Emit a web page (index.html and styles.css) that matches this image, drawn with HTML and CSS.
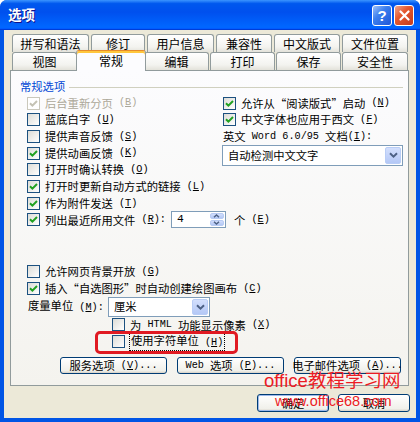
FILE: index.html
```html
<!DOCTYPE html>
<html>
    <head>
        <meta charset="utf-8">
        <title>选项</title>
        <link rel="stylesheet" href="styles.css">
    </head>
    <body>
        <div class="window">
            <div class="titlebar">
                <span class="title">选项</span>
                <span class="cbtn help">?</span>
                <span class="cbtn close">
                    <svg width="11" height="11" viewBox="0 0 11 11"><path d="M1.5 1.5L9.5 9.5M9.5 1.5L1.5 9.5" stroke="#fff" stroke-width="2.2" stroke-linecap="round"/></svg>
                </span>
            </div>

            <div class="client">
                <!-- Back row of tabs -->
                <div class="tabrow row1">
                    <span class="tab">拼写和语法</span>
                    <span class="tab">修订</span>
                    <span class="tab">用户信息</span>
                    <span class="tab">兼容性</span>
                    <span class="tab">中文版式</span>
                    <span class="tab">文件位置</span>
                </div>
                <!-- Front row, holds the selected tab -->
                <div class="tabrow row2">
                    <span class="tab">视图</span>
                    <span class="tab active">常规</span>
                    <span class="tab">编辑</span>
                    <span class="tab">打印</span>
                    <span class="tab">保存</span>
                    <span class="tab">安全性</span>
                </div>

                <div class="panel">
                    <div class="group-label">常规选项</div>

                    <div class="opts">
                        <div class="col">
                            <div class="row disabled"><span class="box"><svg width="9" height="9" viewBox="0 0 9 9"><path d="M1 4.2l2.4 2.4L8 2" fill="none" stroke="#C4C2B4" stroke-width="2"/></svg></span>后台重新分页<span class="m"> (<u>B</u>)</span></div>
                            <div class="row"><span class="box"></span>蓝底白字<span class="m"> (<u>U</u>)</span></div>
                            <div class="row"><span class="box"></span>提供声音反馈<span class="m"> (<u>S</u>)</span></div>
                            <div class="row"><span class="box"><svg width="9" height="9" viewBox="0 0 9 9"><path d="M1 4.2l2.4 2.4L8 2" fill="none" stroke="#21A121" stroke-width="2"/></svg></span>提供动画反馈<span class="m"> (<u>K</u>)</span></div>
                            <div class="row"><span class="box"></span>打开时确认转换<span class="m"> (<u>O</u>)</span></div>
                            <div class="row"><span class="box"><svg width="9" height="9" viewBox="0 0 9 9"><path d="M1 4.2l2.4 2.4L8 2" fill="none" stroke="#21A121" stroke-width="2"/></svg></span>打开时更新自动方式的链接<span class="m"> (<u>L</u>)</span></div>
                            <div class="row"><span class="box"><svg width="9" height="9" viewBox="0 0 9 9"><path d="M1 4.2l2.4 2.4L8 2" fill="none" stroke="#21A121" stroke-width="2"/></svg></span>作为附件发送<span class="m"> (<u>T</u>)</span></div>
                            <div class="row">
                                <span class="box"><svg width="9" height="9" viewBox="0 0 9 9"><path d="M1 4.2l2.4 2.4L8 2" fill="none" stroke="#21A121" stroke-width="2"/></svg></span>列出最近所用文件<span class="m"> (<u>R</u>):</span>
                                <span class="spin">
                                    <span class="val m">4</span>
                                    <span class="arrows">
                                        <span class="arrow"><svg width="7" height="4" viewBox="0 0 7 4"><path d="M1 3.3L3.5 1 6 3.3" fill="none" stroke="#4D6185" stroke-width="1.4"/></svg></span>
                                        <span class="arrow"><svg width="7" height="4" viewBox="0 0 7 4"><path d="M1 0.7L3.5 3 6 0.7" fill="none" stroke="#4D6185" stroke-width="1.4"/></svg></span>
                                    </span>
                                </span>
                                个<span class="m"> (<u>E</u>)</span>
                            </div>
                        </div>

                        <div class="col">
                            <div class="row"><span class="box"><svg width="9" height="9" viewBox="0 0 9 9"><path d="M1 4.2l2.4 2.4L8 2" fill="none" stroke="#21A121" stroke-width="2"/></svg></span>允许从“阅读版式”启动<span class="m"> (<u>N</u>)</span></div>
                            <div class="row"><span class="box"><svg width="9" height="9" viewBox="0 0 9 9"><path d="M1 4.2l2.4 2.4L8 2" fill="none" stroke="#21A121" stroke-width="2"/></svg></span>中文字体也应用于西文<span class="m"> (<u>F</u>)</span></div>
                            <div class="row">英文<span class="m"> Word 6.0/95 </span>文档<span class="m">(<u>I</u>):</span></div>
                            <div class="combo wide">
                                <span class="val">自动检测中文文字</span>
                                <span class="drop"><svg width="9" height="6" viewBox="0 0 9 6"><path d="M1 1.2L4.5 4.6 8 1.2" fill="none" stroke="#4D6185" stroke-width="2"/></svg></span>
                            </div>
                        </div>
                    </div>

                    <div class="lower">
                        <div class="row"><span class="box"></span>允许网页背景开放<span class="m"> (<u>G</u>)</span></div>
                        <div class="row"><span class="box"><svg width="9" height="9" viewBox="0 0 9 9"><path d="M1 4.2l2.4 2.4L8 2" fill="none" stroke="#21A121" stroke-width="2"/></svg></span>插入“自选图形”时自动创建绘图画布<span class="m"> (<u>C</u>)</span></div>
                        <div class="unit-row">
                            <span class="unit-label">度量单位<span class="m"> (<u>M</u>):</span></span>
                            <div class="combo unit">
                                <span class="val">厘米</span>
                                <span class="drop"><svg width="9" height="6" viewBox="0 0 9 6"><path d="M1 1.2L4.5 4.6 8 1.2" fill="none" stroke="#4D6185" stroke-width="2"/></svg></span>
                            </div>
                        </div>
                        <div class="row sub"><span class="box"></span>为<span class="m"> HTML </span>功能显示像素<span class="m"> (<u>X</u>)</span></div>
                        <div class="row sub">
                            <span class="box"></span><span class="focus">使用字符单位<span class="m"> (<u>H</u>)</span></span>
                            <span class="mark"></span>
                        </div>
                    </div>

                    <div class="btnrow">
                        <button class="btn">服务选项<span class="m"> (<u>V</u>)...</span></button>
                        <button class="btn"><span class="m">Web </span>选项<span class="m"> (<u>P</u>)...</span></button>
                        <button class="btn">电子邮件选项<span class="m"> (<u>A</u>)...</span></button>
                    </div>
                </div>

                <div class="footer">
                    <button class="btn wide-btn default">确定</button>
                    <button class="btn wide-btn">取消</button>
                </div>
            </div>

            <div class="watermark">
                <div class="site">office教程学习网</div>
                <div class="url">www.office68.com</div>
            </div>
        </div>
    </body>
</html>
```

FILE: styles.css
```css
* {
  box-sizing: border-box;
}

html, body {
  margin: 0;
}

body {
  background: #fff;
  color: #000;
  font-family: "Noto Sans CJK SC", sans-serif;
  font-size: 11.3px;
  line-height: 1.3;
}

.m {
  font-family: "Liberation Mono", "Noto Sans CJK SC", monospace;
  font-size: 10.2px;
  white-space: pre;
}

/* window frame */
.window {
  position: relative;
  width: 420px;
  height: 422px;
  display: flex;
  flex-direction: column;
  background: #0055E5;
  border-radius: 7px 7px 0 0;
  overflow: hidden;
}

.titlebar {
  flex: none;
  height: 30px;
  display: flex;
  align-items: center;
  gap: 2px;
  padding: 0 6px 0 8px;
  background: linear-gradient(#3C95FF, #0058EE 12%, #0050EE 40%, #0066ff 88%, #0066ff 93%, #005bff 95%, #003dd7 96%, #003dd7);
}

.title {
  flex: 1;
  color: #fff;
  font-size: 13.5px;
  font-weight: bold;
  text-shadow: 1px 1px #0F1089;
}

.cbtn {
  width: 20px;
  height: 21px;
  display: flex;
  align-items: center;
  justify-content: center;
  border: 1px solid #fff;
  border-radius: 3px;
}

.help {
  color: #fff;
  font: bold 15px "Liberation Sans", sans-serif;
  background: linear-gradient(135deg, #9CC1FA, #3C7FEE 40%, #1F55D8);
}

.close {
  background: linear-gradient(135deg, #F0A68E, #E5582F 40%, #C63A1C);
}

.client {
  flex: 1;
  margin: 0 4px 4px;
  padding: 4px 6px 0;
  background: #ECE9D8;
  display: flex;
  flex-direction: column;
}

/* tabs */
.tabrow {
  display: grid;
  height: 18px;
  margin: 0 2px;
}

.row1 {
  grid-template-columns: 79px 56px 69px 58px 68px 66px;
}

.row2 {
  grid-template-columns: repeat(6, 1fr);
}

.tab {
  display: flex;
  align-items: center;
  justify-content: center;
  margin-right: 2px;
  font-size: 12px;
  border: 1px solid #919B9C;
  border-bottom: 0;
  border-radius: 3px 3px 0 0;
  background: linear-gradient(#fff, #F3F3EF 70%, #E3E2DA);
}

.row1 .tab:last-child,
.row2 .tab:last-child {
  margin-right: 0;
}

.row2 .tab {
  margin-right: 1px;
}

.row2 .tab.active {
  position: relative;
  z-index: 1;
  margin: -2px -2px -1px -2px;
  background: #FCFCFE;
  border-top: 1px solid #E68B2C;
  box-shadow: inset 0 2px #FFC73C;
}

/* panel */
.panel {
  flex: none;
  height: 316px;
  margin-right: 1px;
  padding-top: 7px;
  border: 1px solid #919B9C;
  background: linear-gradient(#FCFCFE, #F4F3EE);
}

.group-label {
  display: flex;
  align-items: center;
  gap: 4px;
  height: 16.7px;
  padding: 0 5px 0 9px;
  color: #0046D5;
}

.group-label::after {
  content: "";
  flex: 1;
  margin-top: 3px;
  border-top: 1px solid #D0D0BF;
}

.opts {
  display: grid;
  grid-template-columns: 196px 1fr;
  padding: 0 5px 0 16px;
}

.row {
  display: flex;
  align-items: center;
  height: 16.7px;
  white-space: nowrap;
}

.row.disabled {
  color: #ACA899;
}

.box {
  flex: none;
  width: 13px;
  height: 13px;
  margin-right: 5px;
  display: flex;
  align-items: center;
  justify-content: center;
  border: 1px solid #1C5180;
  background: linear-gradient(135deg, #DCDCD7, #fff);
}

.disabled .box {
  border-color: #CAC8BB;
  background: #fff;
}

/* spin box */
.spin {
  flex: none;
  display: flex;
  width: 55px;
  height: 17px;
  margin: 0 8px 0 5px;
  padding: 1px;
  border: 1px solid #7F9DB9;
  background: #fff;
}

.spin .val {
  flex: 1;
  padding-left: 4px;
  line-height: 13px;
  font-size: 11.3px;
}

.arrows {
  width: 14px;
  display: flex;
  flex-direction: column;
  gap: 1px;
}

.arrow {
  flex: 1;
  display: flex;
  align-items: center;
  justify-content: center;
  border-radius: 2px;
  background: linear-gradient(#D2DEFC, #B3C8F5);
  border: 1px solid #B7CBF4;
}

/* combo boxes */
.combo {
  display: flex;
  padding: 1px;
  border: 1px solid #7F9DB9;
  background: #fff;
}

.combo .val {
  flex: 1;
  display: flex;
  align-items: center;
  padding-left: 4px;
}

.combo .drop {
  width: 16px;
  display: flex;
  align-items: center;
  justify-content: center;
  border: 1px solid #B9CDF6;
  border-radius: 2px;
  background: linear-gradient(#D3DFFD, #B4C8F6);
}

.combo.wide {
  height: 21px;
  margin-left: -1px;
}

.combo.unit {
  width: 102px;
  height: 20px;
}

/* lower part */
.lower {
  margin-top: 35px;
  padding-left: 16px;
}

.unit-row {
  display: flex;
  align-items: center;
  height: 20px;
}

.unit-label {
  width: 81px;
  padding-left: 1px;
  white-space: nowrap;
}

.row.sub {
  position: relative;
  padding-left: 85px;
}

.focus {
  padding: 0 1px;
  outline: 1px dotted #000;
}

/* red marker drawn over the dialog */
.mark {
  position: absolute;
  left: 68px;
  top: -2.4px;
  width: 143px;
  height: 23px;
  border: 3px solid #E01A22;
  border-radius: 5px;
}

/* buttons */
.btnrow {
  display: flex;
  gap: 10px;
  margin-top: 7px;
  padding-left: 49px;
}

.btn {
  width: 107px;
  height: 17px;
  padding: 0;
  display: flex;
  align-items: center;
  justify-content: center;
  font: inherit;
  color: #000;
  white-space: nowrap;
  border: 1px solid #003C74;
  border-radius: 3px;
  background: linear-gradient(#fff, #F0F0EA 86%, #D6D0C5);
}

.footer {
  display: flex;
  justify-content: flex-end;
  gap: 9px;
  margin-top: 8px;
}

.wide-btn {
  width: 72px;
  height: 18px;
}

.default {
  box-shadow: inset 0 0 0 1px #9DB9EB;
}

/* watermark stamped on the picture */
.watermark {
  position: absolute;
  left: 264px;
  top: 372px;
  color: #EC1C24;
  font-family: "Liberation Sans", "Noto Sans CJK SC", sans-serif;
  line-height: 1;
}

.site {
  font-size: 18.5px;
}

.url {
  margin: 3px 0 0 11px;
  font-size: 14.5px;
}
```
